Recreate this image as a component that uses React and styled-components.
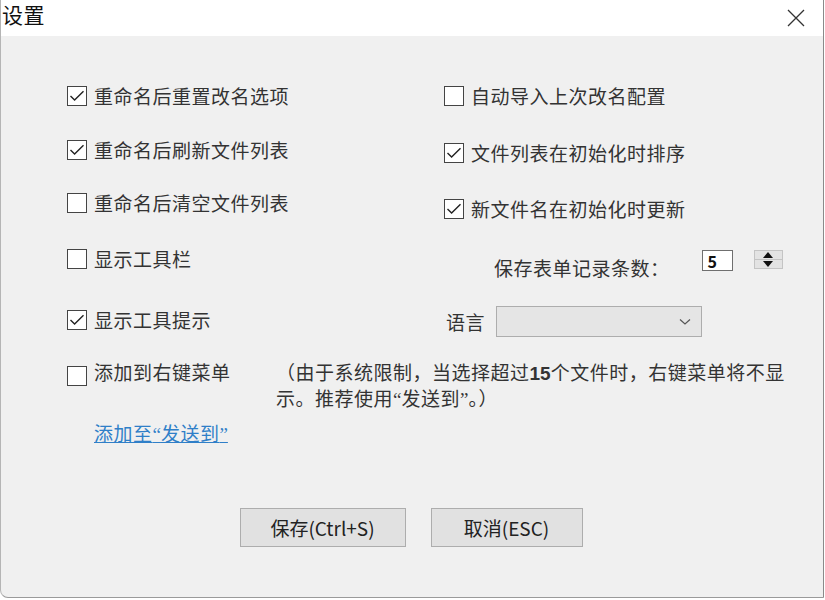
import styled, { createGlobalStyle } from "styled-components";

const GlobalStyle = createGlobalStyle`
  html, body {
    margin: 0;
    padding: 0;
    background: #ffffff;
  }
  body {
    font-family: "Noto Sans CJK SC", "Liberation Sans", sans-serif;
  }
`;

const Window = styled.div`
  width: 822px;
  height: 597px;
  display: flex;
  flex-direction: column;
  border-left: 1px solid #b5b5b5;
  border-right: 1px solid #8a8a8a;
  border-bottom: 1px solid #9a9a9a;
  border-bottom-left-radius: 8px;
  overflow: hidden;
  background: #f0f0f0;
`;

const TitleBar = styled.div`
  height: 36px;
  background: #ffffff;
  display: flex;
  align-items: center;
  justify-content: space-between;
  padding: 0 18px 0 1px;
  .title {
    font-size: 21px;
    color: #111;
    letter-spacing: 0.5px;
    line-height: 28px;
    margin-top: -8px;
  }
`;

const Body = styled.div`
  flex: 1;
  padding: 48px 0 0 66px;
  display: flex;
  flex-direction: column;
`;

const Columns = styled.div`
  display: grid;
  grid-template-columns: 377px 1fr;
  align-items: start;
`;

const Column = styled.div`
  display: flex;
  flex-direction: column;
`;

const Row = styled.div`
  display: flex;
  align-items: ${(p) => p.$align || "center"};
  margin-top: ${(p) => p.$top || 0}px;
  min-height: 24px;
`;

const Label = styled.span`
  font-size: 19px;
  letter-spacing: 0.5px;
  color: #333;
  line-height: 24px;
  white-space: nowrap;
  padding-top: ${(p) => p.$pad || 0}px;
  margin-left: ${(p) => p.$left || 0}px;
`;

const Quote = styled.span`
  font-family: "Liberation Serif", serif;
  letter-spacing: 0;
`;

const Box = styled.span`
  width: 18px;
  height: 18px;
  border: 1.5px solid #444;
  background: #fff;
  display: inline-flex;
  align-items: center;
  justify-content: center;
  margin-right: 7px;
  margin-top: ${(p) => p.$top || 0}px;
  flex-shrink: 0;
`;

const Check = ({ checked, label, top }) => (
  <Row $align={top ? "flex-start" : "center"}>
    <Box $top={top}>
      {checked && (
        <svg width="16" height="16" viewBox="0 0 16 16">
          <path d="M1.5 8 L5.6 12 L14.5 3.2" fill="none" stroke="#222" strokeWidth="1.4" />
        </svg>
      )}
    </Box>
    <Label>{label}</Label>
  </Row>
);

const NumInput = styled.div`
  width: 31px;
  height: 21px;
  margin-left: 32px;
  border: 1px solid #6f6f6f;
  background: #fff;
  font-size: 16px;
  font-weight: 600;
  color: #111;
  line-height: 20px;
  padding-left: 5px;
  box-sizing: border-box;
`;

const Spinner = styled.div`
  width: 29px;
  height: 19px;
  margin-left: 21px;
  display: flex;
  flex-direction: column;
  border: 1px solid #c4c4c4;
  background: #e3e3e3;
  box-sizing: border-box;
`;

const SpinHalf = styled.div`
  flex: 1;
  display: flex;
  align-items: center;
  justify-content: center;
  border-top: ${(p) => (p.$lower ? "1px solid #c4c4c4" : "none")};
`;

const Select = styled.div`
  width: 206px;
  height: 31px;
  margin-left: 11px;
  background: #e5e5e5;
  border: 1px solid #adadad;
  box-sizing: border-box;
  display: flex;
  align-items: center;
  justify-content: flex-end;
  padding-right: 10px;
`;

const Note = styled.div`
  margin-left: 1px;
  font-size: 19px;
  letter-spacing: 0.5px;
  line-height: 24px;
  color: #333;
  white-space: nowrap;
  b {
    font-weight: 700;
    font-family: "Liberation Sans", sans-serif;
    letter-spacing: 0;
  }
`;

const Link = styled.a`
  margin: 9px 0 0 27px;
  font-size: 19px;
  letter-spacing: 0.5px;
  line-height: 24px;
  color: #2f7fc8;
  text-decoration: underline;
  align-self: flex-start;
  cursor: pointer;
`;

const ButtonBar = styled.div`
  margin: 61px 0 0 -68px;
  display: flex;
  justify-content: center;
  gap: 25px;
`;

const Button = styled.button`
  width: ${(p) => p.$w}px;
  height: 39px;
  background: #e1e1e1;
  border: 1px solid #adadad;
  font-family: "Noto Sans CJK SC", "Liberation Sans", sans-serif;
  font-size: 19px;
  color: #222;
  padding: 0;
  cursor: pointer;
`;

export default function App() {
  return (
    <>
      <GlobalStyle />
      <Window>
        <TitleBar>
          <span className="title">设置</span>
          <svg width="18" height="18" viewBox="0 0 18 18">
            <path d="M1 1 L17 17 M17 1 L1 17" stroke="#333" strokeWidth="1.3" />
          </svg>
        </TitleBar>
        <Body>
          <Columns>
            <Column>
              <Check checked label="重命名后重置改名选项" />
              <Row $top={30}>
                <Check checked label="重命名后刷新文件列表" />
              </Row>
              <Row $top={29}>
                <Check label="重命名后清空文件列表" />
              </Row>
              <Row $top={32}>
                <Check label="显示工具栏" />
              </Row>
              <Row $top={37}>
                <Check checked label="显示工具提示" />
              </Row>
            </Column>
            <Column>
              <Check label="自动导入上次改名配置" />
              <Row $top={33}>
                <Check checked label="文件列表在初始化时排序" />
              </Row>
              <Row $top={32}>
                <Check checked label="新文件名在初始化时更新" />
              </Row>
              <Row $top={29} $align="flex-start">
                <Label $pad={6} $left={50}>保存表单记录条数：</Label>
                <NumInput>5</NumInput>
                <Spinner>
                  <SpinHalf>
                    <svg width="10" height="6" viewBox="0 0 10 6">
                      <path d="M5 0 L10 6 L0 6 Z" fill="#111" />
                    </svg>
                  </SpinHalf>
                  <SpinHalf $lower>
                    <svg width="10" height="6" viewBox="0 0 10 6">
                      <path d="M0 0 L10 0 L5 6 Z" fill="#111" />
                    </svg>
                  </SpinHalf>
                </Spinner>
              </Row>
              <Row $top={26}>
                <Label $left={2}>语言</Label>
                <Select>
                  <svg width="12" height="8" viewBox="0 0 12 8">
                    <path d="M1 1.5 L6 6 L11 1.5" fill="none" stroke="#555" strokeWidth="1.2" />
                  </svg>
                </Select>
              </Row>
            </Column>
          </Columns>
          <Row $top={23} $align="flex-start">
            <div style={{ width: 208 }}>
              <Check top={6} label="添加到右键菜单" />
            </div>
            <Note>
              （由于系统限制，当选择超过<b>15</b>个文件时，右键菜单将不显
              <br />
              示。推荐使用<Quote>“</Quote>发送到<Quote>”</Quote>。）
            </Note>
          </Row>
          <Link>
            添加至<Quote>“</Quote>发送到<Quote>”</Quote>
          </Link>
          <ButtonBar>
            <Button $w={166}>保存(Ctrl+S)</Button>
            <Button $w={152}>取消(ESC)</Button>
          </ButtonBar>
        </Body>
      </Window>
    </>
  );
}
